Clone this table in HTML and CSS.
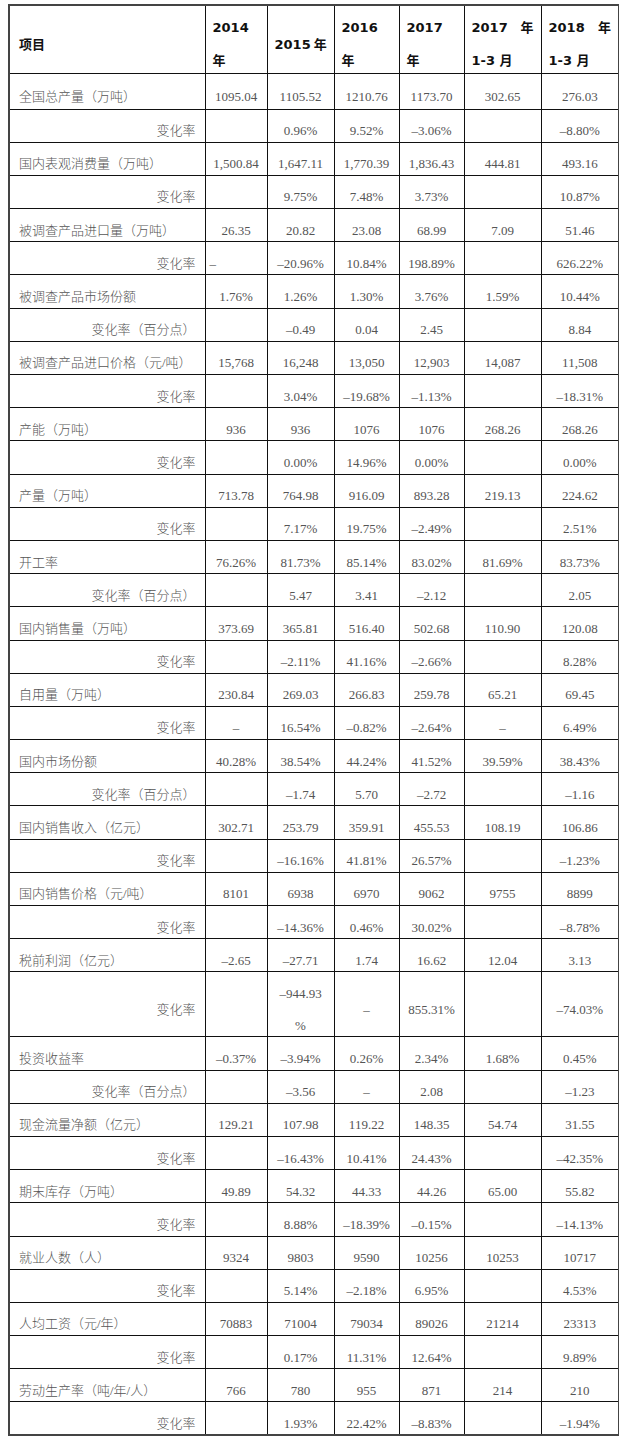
FILE: index.html
```html
<!DOCTYPE html>
<html lang="zh-CN">
<head>
<meta charset="utf-8">
<title>表</title>
<link rel="stylesheet" href="styles.css">
</head>
<body>
<table class="data">
  <colgroup>
    <col class="c-label"><col class="c-2014"><col class="c-2015"><col class="c-2016"><col class="c-2017"><col class="c-q17"><col class="c-q18">
  </colgroup>
  <thead>
    <tr class="head">
      <th class="hl">项目</th>
      <th><div class="stack"><span>2014</span><span>年</span></div></th>
      <th>2015<span class="gap"></span>年</th>
      <th><div class="stack"><span>2016</span><span>年</span></div></th>
      <th><div class="stack"><span>2017</span><span>年</span></div></th>
      <th><div class="stack"><span class="spread"><span>2017</span><span>年</span></span><span>1-3 月</span></div></th>
      <th><div class="stack"><span class="spread"><span>2018</span><span>年</span></span><span>1-3 月</span></div></th>
    </tr>
  </thead>
  <tbody>
    <tr class="r1"><td class="lab">全国总产量（万吨）</td><td>1095.04</td><td>1105.52</td><td>1210.76</td><td>1173.70</td><td>302.65</td><td>276.03</td></tr>
    <tr><td class="chg">变化率</td><td></td><td>0.96%</td><td>9.52%</td><td>–3.06%</td><td></td><td>–8.80%</td></tr>
    <tr><td class="lab">国内表观消费量（万吨）</td><td>1,500.84</td><td>1,647.11</td><td>1,770.39</td><td>1,836.43</td><td>444.81</td><td>493.16</td></tr>
    <tr><td class="chg">变化率</td><td></td><td>9.75%</td><td>7.48%</td><td>3.73%</td><td></td><td>10.87%</td></tr>
    <tr><td class="lab">被调查产品进口量（万吨）</td><td>26.35</td><td>20.82</td><td>23.08</td><td>68.99</td><td>7.09</td><td>51.46</td></tr>
    <tr><td class="chg">变化率</td><td class="left">–</td><td>–20.96%</td><td>10.84%</td><td>198.89%</td><td></td><td>626.22%</td></tr>
    <tr><td class="lab">被调查产品市场份额</td><td>1.76%</td><td>1.26%</td><td>1.30%</td><td>3.76%</td><td>1.59%</td><td>10.44%</td></tr>
    <tr><td class="chg">变化率（百分点）</td><td></td><td>–0.49</td><td>0.04</td><td>2.45</td><td></td><td>8.84</td></tr>
    <tr><td class="lab">被调查产品进口价格（元/吨）</td><td>15,768</td><td>16,248</td><td>13,050</td><td>12,903</td><td>14,087</td><td>11,508</td></tr>
    <tr><td class="chg">变化率</td><td></td><td>3.04%</td><td>–19.68%</td><td>–1.13%</td><td></td><td>–18.31%</td></tr>
    <tr><td class="lab">产能（万吨）</td><td>936</td><td>936</td><td>1076</td><td>1076</td><td>268.26</td><td>268.26</td></tr>
    <tr><td class="chg">变化率</td><td></td><td>0.00%</td><td>14.96%</td><td>0.00%</td><td></td><td>0.00%</td></tr>
    <tr><td class="lab">产量（万吨）</td><td>713.78</td><td>764.98</td><td>916.09</td><td>893.28</td><td>219.13</td><td>224.62</td></tr>
    <tr><td class="chg">变化率</td><td></td><td>7.17%</td><td>19.75%</td><td>–2.49%</td><td></td><td>2.51%</td></tr>
    <tr><td class="lab">开工率</td><td>76.26%</td><td>81.73%</td><td>85.14%</td><td>83.02%</td><td>81.69%</td><td>83.73%</td></tr>
    <tr><td class="chg">变化率（百分点）</td><td></td><td>5.47</td><td>3.41</td><td>–2.12</td><td></td><td>2.05</td></tr>
    <tr><td class="lab">国内销售量（万吨）</td><td>373.69</td><td>365.81</td><td>516.40</td><td>502.68</td><td>110.90</td><td>120.08</td></tr>
    <tr><td class="chg">变化率</td><td></td><td>–2.11%</td><td>41.16%</td><td>–2.66%</td><td></td><td>8.28%</td></tr>
    <tr><td class="lab">自用量（万吨）</td><td>230.84</td><td>269.03</td><td>266.83</td><td>259.78</td><td>65.21</td><td>69.45</td></tr>
    <tr><td class="chg">变化率</td><td>–</td><td>16.54%</td><td>–0.82%</td><td>–2.64%</td><td>–</td><td>6.49%</td></tr>
    <tr><td class="lab">国内市场份额</td><td>40.28%</td><td>38.54%</td><td>44.24%</td><td>41.52%</td><td>39.59%</td><td>38.43%</td></tr>
    <tr><td class="chg">变化率（百分点）</td><td></td><td>–1.74</td><td>5.70</td><td>–2.72</td><td></td><td>–1.16</td></tr>
    <tr><td class="lab">国内销售收入（亿元）</td><td>302.71</td><td>253.79</td><td>359.91</td><td>455.53</td><td>108.19</td><td>106.86</td></tr>
    <tr><td class="chg">变化率</td><td></td><td>–16.16%</td><td>41.81%</td><td>26.57%</td><td></td><td>–1.23%</td></tr>
    <tr><td class="lab">国内销售价格（元/吨）</td><td>8101</td><td>6938</td><td>6970</td><td>9062</td><td>9755</td><td>8899</td></tr>
    <tr><td class="chg">变化率</td><td></td><td>–14.36%</td><td>0.46%</td><td>30.02%</td><td></td><td>–8.78%</td></tr>
    <tr><td class="lab">税前利润（亿元）</td><td>–2.65</td><td>–27.71</td><td>1.74</td><td>16.62</td><td>12.04</td><td>3.13</td></tr>
    <tr class="tall"><td class="chg">变化率</td><td></td><td><div class="stack2"><span>–944.93</span><span>%</span></div></td><td>–</td><td>855.31%</td><td></td><td>–74.03%</td></tr>
    <tr><td class="lab">投资收益率</td><td>–0.37%</td><td>–3.94%</td><td>0.26%</td><td>2.34%</td><td>1.68%</td><td>0.45%</td></tr>
    <tr><td class="chg">变化率（百分点）</td><td></td><td>–3.56</td><td>–</td><td>2.08</td><td></td><td>–1.23</td></tr>
    <tr><td class="lab">现金流量净额（亿元）</td><td>129.21</td><td>107.98</td><td>119.22</td><td>148.35</td><td>54.74</td><td>31.55</td></tr>
    <tr><td class="chg">变化率</td><td></td><td>–16.43%</td><td>10.41%</td><td>24.43%</td><td></td><td>–42.35%</td></tr>
    <tr><td class="lab">期末库存（万吨）</td><td>49.89</td><td>54.32</td><td>44.33</td><td>44.26</td><td>65.00</td><td>55.82</td></tr>
    <tr><td class="chg">变化率</td><td></td><td>8.88%</td><td>–18.39%</td><td>–0.15%</td><td></td><td>–14.13%</td></tr>
    <tr><td class="lab">就业人数（人）</td><td>9324</td><td>9803</td><td>9590</td><td>10256</td><td>10253</td><td>10717</td></tr>
    <tr><td class="chg">变化率</td><td></td><td>5.14%</td><td>–2.18%</td><td>6.95%</td><td></td><td>4.53%</td></tr>
    <tr><td class="lab">人均工资（元/年）</td><td>70883</td><td>71004</td><td>79034</td><td>89026</td><td>21214</td><td>23313</td></tr>
    <tr><td class="chg">变化率</td><td></td><td>0.17%</td><td>11.31%</td><td>12.64%</td><td></td><td>9.89%</td></tr>
    <tr><td class="lab">劳动生产率（吨/年/人）</td><td>766</td><td>780</td><td>955</td><td>871</td><td>214</td><td>210</td></tr>
    <tr><td class="chg">变化率</td><td></td><td>1.93%</td><td>22.42%</td><td>–8.83%</td><td></td><td>–1.94%</td></tr>
  </tbody>
</table>
</body>
</html>
```
FILE: styles.css
```css
html, body {
  background: #ffffff;
}
body {
  margin: 4px 8px;
}
.data {
  border-collapse: collapse;
  table-layout: fixed;
  width: 610px;
  border: 2px solid #444;
}
.c-label { width: 196px; }
.c-2014 { width: 62px; }
.c-2015 { width: 67px; }
.c-2016 { width: 65px; }
.c-2017 { width: 65px; }
.c-q17 { width: 77px; }
.c-q18 { width: 78px; }

.data th,
.data td {
  border: 1px solid #111;
  vertical-align: middle;
  overflow: visible;
}
.head {
  height: 68px;
}
.data th {
  font-family: "DejaVu Sans", "Noto Sans CJK SC", sans-serif;
  font-weight: bold;
  font-size: 13px;
  color: #111;
  text-align: left;
  line-height: 18px;
  padding: 11px 7px 0 7px;
  white-space: nowrap;
}
.data th.hl {
  padding-left: 9px;
}
.gap {
  display: inline-block;
  width: 3px;
}
.stack {
  display: flex;
  flex-direction: column;
  gap: 15px;
}
.spread {
  display: flex;
  justify-content: space-between;
}
.data tbody tr {
  height: 33.2px;
}
.data tbody tr.r1 {
  height: 36px;
}
.data tbody tr.tall {
  height: 65px;
}
.data td {
  font-family: "Liberation Serif", "Noto Sans CJK SC", serif;
  font-weight: 300;
  font-size: 13px;
  color: #555;
  text-align: center;
  line-height: 18px;
  padding: 11px 2px 0 2px;
  white-space: nowrap;
}
.data td.lab {
  text-align: left;
  padding-left: 9px;
}
.data td.chg {
  text-align: right;
  padding-right: 9px;
}
.data td.left {
  text-align: left;
  padding-left: 4px;
}
.stack2 {
  display: flex;
  flex-direction: column;
  gap: 14px;
  align-items: center;
}
```
